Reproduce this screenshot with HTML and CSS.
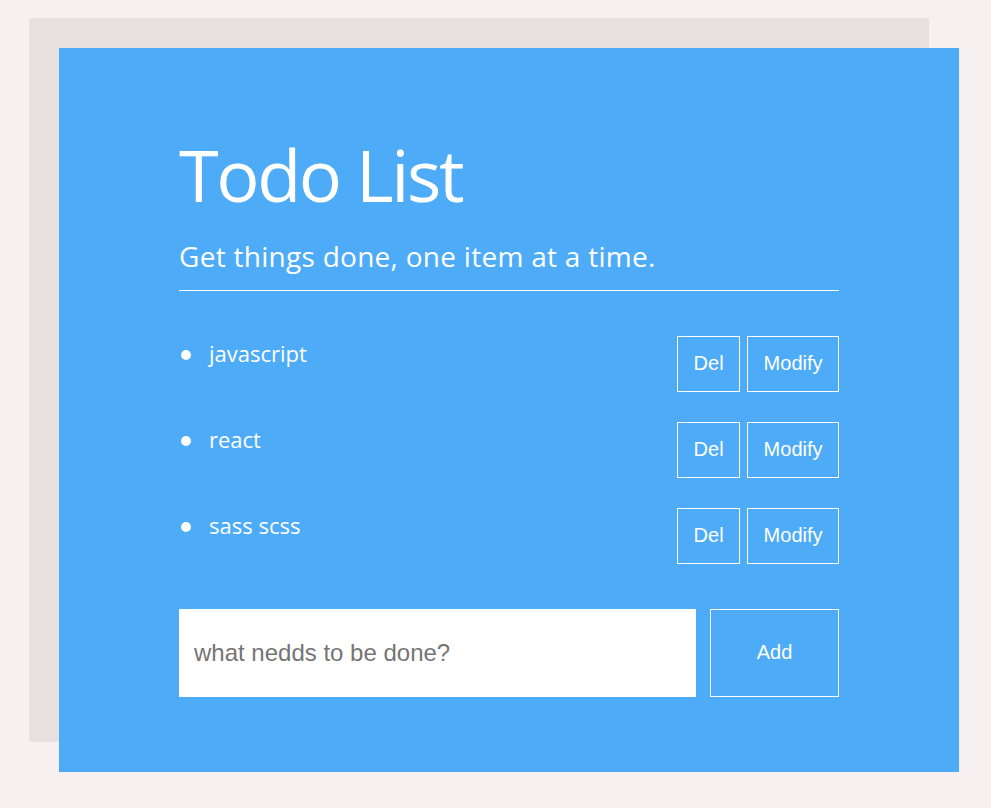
FILE: index.html
```html
<!DOCTYPE html>
<html lang="en">
<head>
<meta charset="utf-8">
<title>Todo List</title>
<link rel="stylesheet" href="styles.css">
</head>
<body>
<div class="page">
  <main class="panel">
    <header class="header">
      <h1 class="title">Todo List</h1>
      <p class="subtitle">Get things done, one item at a time.</p>
    </header>
    <ul class="list">
      <li class="item">
        <span class="item-label"><span class="dot"></span><span class="item-text">javascript</span></span>
        <span class="actions"><button class="btn">Del</button><button class="btn">Modify</button></span>
      </li>
      <li class="item">
        <span class="item-label"><span class="dot"></span><span class="item-text">react</span></span>
        <span class="actions"><button class="btn">Del</button><button class="btn">Modify</button></span>
      </li>
      <li class="item">
        <span class="item-label"><span class="dot"></span><span class="item-text">sass scss</span></span>
        <span class="actions"><button class="btn">Del</button><button class="btn">Modify</button></span>
      </li>
    </ul>
    <form class="add-form">
      <input class="add-input" type="text" placeholder="what nedds to be done?">
      <button class="btn add-btn" type="button">Add</button>
    </form>
  </main>
</div>
</body>
</html>
```
FILE: styles.css
```css
html, body {
  margin: 0;
  padding: 0;
  background: #f6f0f0;
}
.page {
  padding: 48px 0 36px 59px;
}
.panel {
  width: 900px;
  height: 724px;
  box-sizing: border-box;
  padding: 90px 120px 75px;
  background: #4dabf7;
  box-shadow: -30px -30px 0 0 #e7e1e1;
  color: #fff;
  font-family: "Open Sans", "Noto Sans", sans-serif;
}
.header {
  border-bottom: 1px solid #fff;
  padding-bottom: 17px;
}
.title {
  margin: 0;
  font-size: 72px;
  line-height: 72px;
  font-weight: 400;
  letter-spacing: -2.4px;
}
.subtitle {
  margin: 29px 0 0;
  font-size: 28px;
  line-height: 34px;
  letter-spacing: 0.28px;
}
.list {
  list-style: none;
  margin: 45px 0 0;
  padding: 0;
  display: flex;
  flex-direction: column;
  gap: 30px;
}
.item {
  display: flex;
  justify-content: space-between;
  align-items: flex-start;
  height: 56px;
}
.item-label {
  display: flex;
  align-items: flex-start;
}
.dot {
  width: 10px;
  height: 10px;
  border-radius: 50%;
  background: #fff;
  margin: 14px 18px 0 2px;
}
.item-text {
  font-size: 22px;
  line-height: 35px;
}
.actions {
  display: flex;
  gap: 7px;
}
.btn {
  height: 56px;
  padding: 0 15.5px 2px;
  background: transparent;
  border: 1px solid #fff;
  border-radius: 0;
  color: #fff;
  font-family: "Liberation Sans", Arial, sans-serif;
  font-size: 20px;
}
.add-form {
  display: flex;
  justify-content: space-between;
  margin-top: 45px;
  height: 88px;
}
.add-input {
  width: 517px;
  height: 88px;
  box-sizing: border-box;
  border: none;
  outline: none;
  padding: 0 15px;
  font-family: "Liberation Sans", Arial, sans-serif;
  font-size: 24px;
  color: #333;
  background: #fff;
}
.add-input::placeholder {
  color: #757575;
}
.add-btn {
  width: 129px;
  height: 88px;
}
```
